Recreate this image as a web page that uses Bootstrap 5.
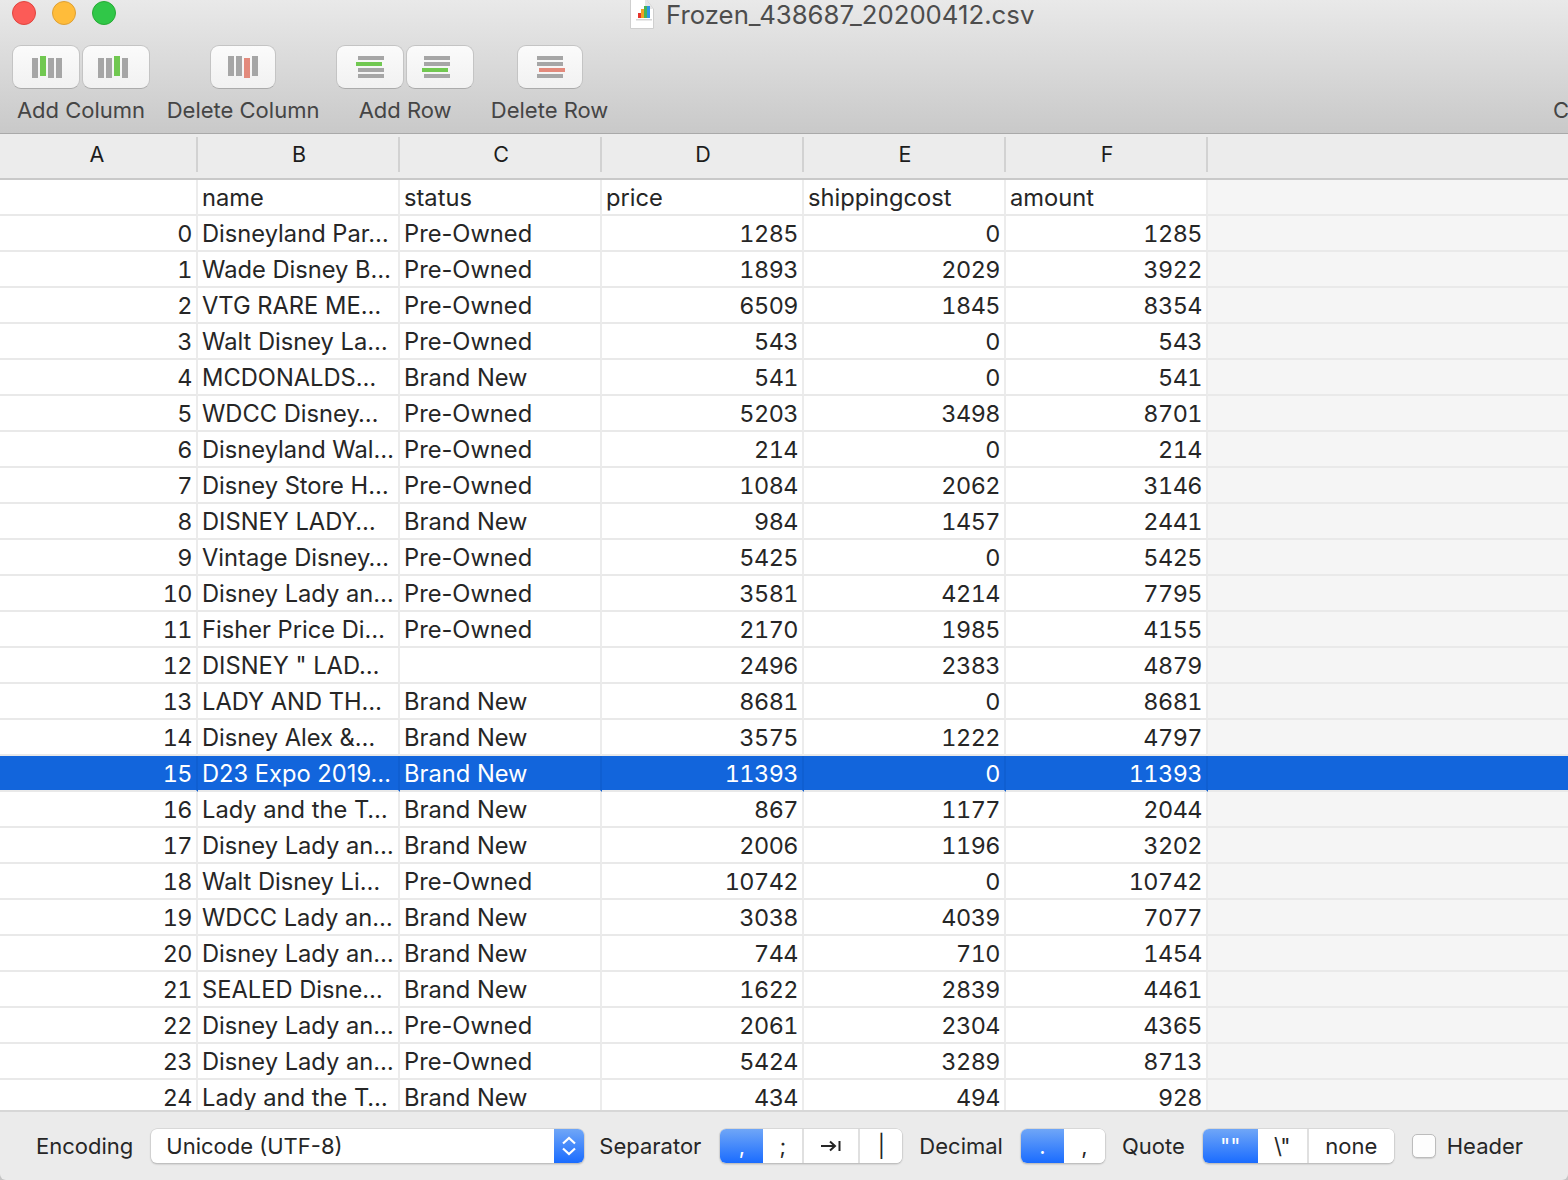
<!DOCTYPE html>
<html lang="en">
<head>
<meta charset="utf-8">
<title>Frozen_438687_20200412.csv</title>
<link href="https://cdn.jsdelivr.net/npm/bootstrap@5.3.0/dist/css/bootstrap.min.css" rel="stylesheet">
<style>
html,body{height:100%;margin:0;overflow:hidden}
body{font-family:Inter,"Liberation Sans",sans-serif;font-size:23.7px;color:#262626;background:#c4c4c4}
.appwin{height:1180px;width:1568px}
.chrome{height:134px;background:linear-gradient(#e9e9e9,#c9c9c9);border-bottom:1px solid #a9a9a9;flex:none}
.titlebar{height:31px;position:relative}
.light{width:24px;height:24px;border-radius:50%;display:block;position:absolute;top:1px}
.l1{left:12px;background:#fc5b57;border:1px solid #e0443e}
.l2{left:52px;background:#ffbc3a;border:1px solid #dea034}
.l3{left:92px;background:#30c748;border:1px solid #27aa35}
.wintitle{position:absolute;left:666px;top:-4px;font-size:25.75px;line-height:38px;color:#4d4d4d;white-space:nowrap}
.docicon{position:absolute;left:630px;top:0}
.tools{padding:14px 0 0 12px;gap:16.7px}
.toolcell{color:#454545;white-space:nowrap}
.toolbtn{height:44px;background:linear-gradient(#fbfbfb,#f1f1f1);border:1px solid #c4c4c4;border-bottom-color:#ababab;border-radius:9px;padding:0;display:flex;align-items:center;justify-content:center}
.w68{width:68px}.w66{width:66px}
.toolbtns{gap:2px}
.nudge3{margin-right:6px}.nudge4{margin-right:8px}.nudge1{margin-left:2px}
.toollabel{line-height:32px;margin-top:4.5px;font-size:22px}
.clipc{margin-left:auto;width:15px;overflow:hidden;color:#454545;font-size:22px;line-height:32px;margin-top:48.5px}
.colhead{height:46px;background:#ececec;border-bottom:2px solid #c9c9c9;flex:none;padding-top:3px}
.hcell{width:202px;height:35px;border-right:2px solid #d2d2d2;line-height:34px;text-align:center;font-size:21.5px;color:#1c1c1c;padding-left:2px}
.hcell.first{width:198px;padding-left:0;padding-right:2px}
.bodyclip{flex:1 1 auto;overflow:hidden;min-height:0;background:#f5f5f5}
table.sheet{table-layout:fixed;width:100%;border-collapse:separate;border-spacing:0;margin:0}
.sheet>tbody>tr>td{height:36px;padding:2px 4px 0 4px;line-height:32px;background:#fff;color:#262626;border-bottom:2px solid #e9e9e9;border-right:2px solid #ececec;white-space:nowrap;overflow:hidden;box-shadow:none;vertical-align:middle}
.sheet>tbody>tr>td.num{text-align:right;padding-right:4px;font-variant-numeric:tabular-nums;font-size:23.4px;letter-spacing:-.5px}
.sheet>tbody>tr>td.filler{background:#f5f5f5;border-right:0}
.sheet>tbody>tr.picked>td,.sheet>tbody>tr.picked>td.filler{background:#1265dc;color:#fff;border-right-color:#0f5fd2}
.footbar{height:70px;flex:none;background:#ebebeb;border-top:2px solid #d7d7d7;padding:0 0 0 36px;border-radius:0 0 6px 6px}
.flabel{white-space:nowrap;color:#262626;font-size:22px}
.selbox{width:433px;height:34px;background:#fff;border-radius:6px;box-shadow:0 0 0 .5px #c9c9c9,0 1px 2px rgba(0,0,0,.3);margin-left:18px;padding-left:15px;line-height:34px;overflow:hidden;font-size:22px;color:#262626}
.stepper{width:30px;height:34px;background:linear-gradient(#6fa6f7,#1a6cff)}
.segs{height:34px;border-radius:6px;box-shadow:0 0 0 .5px #c9c9c9,0 1px 2px rgba(0,0,0,.3);overflow:hidden;background:#fff;flex:none}
.btn-group.segs>.btn{height:34px;padding:0;border:0;border-radius:0;border-right:2px solid #e0e0e0;font-size:22px;line-height:34px;color:#262626;background:#fff;flex:none}
.btn-group.segs>:not(.btn-check:first-child)+.btn{margin-left:0}
.btn-group.segs>.btn:last-child{border-right:0}
.btn-group.segs>.btn.on{background:linear-gradient(#6fa6f7,#1a6cff);color:#fff;border-right:0}
.ml-sep{margin-left:15px}.ml-seg{margin-left:18px}.ml-lab{margin-left:17px}.ml-first{margin-left:19px}
.form-check-input.chk{width:24px;height:24px;margin:0 11px 0 18px;flex:none;border:1px solid #bcbcbc;border-radius:5px;background-color:#fdfdfd;box-shadow:0 1px 1px rgba(0,0,0,.12)}
</style>
</head>
<body>
<div class="appwin d-flex flex-column">
  <div class="chrome">
    <div class="titlebar">
      <span class="light l1"></span><span class="light l2"></span><span class="light l3"></span>
      <svg class="docicon" width="24" height="29" viewBox="0 0 24 29"><path d="M.5 -2H15L23.5 9V28.5H.5Z" fill="#fff" stroke="#cfcfcf"/><path d="M15 -2V9H23.5Z" fill="#e6e6e6"/><rect x="6" y="19" width="16" height="1.5" fill="#d6d6d6"/><rect x="8" y="13" width="3" height="5" fill="#e5342c"/><rect x="11" y="9" width="3" height="9" fill="#f2a124"/><rect x="14" y="6" width="3" height="12" fill="#47b558"/><rect x="17" y="6" width="3" height="12" fill="#2d96e8"/></svg>
      <div class="wintitle">Frozen_438687_20200412.csv</div>
    </div>
    <div class="d-flex tools">
      <div class="toolcell d-flex flex-column align-items-center">
        <div class="d-flex toolbtns">
          <button type="button" class="toolbtn w68"><svg class="nudge1" width="30" height="22" viewBox="0 0 30 22"><rect x="0" y="2" width="6" height="20" fill="#a6a6a6"/><rect x="8" y="0" width="6" height="20" fill="#71c851"/><rect x="16" y="2" width="6" height="20" fill="#a6a6a6"/><rect x="24" y="2" width="6" height="20" fill="#a6a6a6"/></svg></button>
          <button type="button" class="toolbtn w68"><svg class="nudge3" width="30" height="22" viewBox="0 0 30 22"><rect x="0" y="2" width="6" height="20" fill="#a6a6a6"/><rect x="8" y="2" width="6" height="20" fill="#a6a6a6"/><rect x="16" y="0" width="6" height="20" fill="#71c851"/><rect x="24" y="2" width="6" height="20" fill="#a6a6a6"/></svg></button>
        </div>
        <div class="toollabel">Add Column</div>
      </div>
      <div class="toolcell d-flex flex-column align-items-center">
        <button type="button" class="toolbtn w66"><svg width="30" height="22" viewBox="0 0 30 22"><rect x="0" y="0" width="6" height="20" fill="#a6a6a6"/><rect x="8" y="0" width="6" height="20" fill="#a6a6a6"/><rect x="16" y="2" width="6" height="20" fill="#e38a7c"/><rect x="24" y="0" width="6" height="20" fill="#a6a6a6"/></svg></button>
        <div class="toollabel">Delete Column</div>
      </div>
      <div class="toolcell d-flex flex-column align-items-center">
        <div class="d-flex toolbtns">
          <button type="button" class="toolbtn w68"><svg width="28" height="22" viewBox="0 0 28 22"><rect x="2" y="0" width="26" height="4" fill="#a6a6a6"/><rect x="0" y="6" width="26" height="4" fill="#71c851"/><rect x="2" y="12" width="26" height="4" fill="#a6a6a6"/><rect x="2" y="18" width="26" height="4" fill="#a6a6a6"/></svg></button>
          <button type="button" class="toolbtn w68"><svg class="nudge4" width="28" height="22" viewBox="0 0 28 22"><rect x="2" y="0" width="26" height="4" fill="#a6a6a6"/><rect x="2" y="6" width="26" height="4" fill="#a6a6a6"/><rect x="0" y="12" width="26" height="4" fill="#71c851"/><rect x="2" y="18" width="26" height="4" fill="#a6a6a6"/></svg></button>
        </div>
        <div class="toollabel">Add Row</div>
      </div>
      <div class="toolcell d-flex flex-column align-items-center">
        <button type="button" class="toolbtn w66"><svg class="nudge1" width="28" height="22" viewBox="0 0 28 22"><rect x="0" y="0" width="26" height="4" fill="#a6a6a6"/><rect x="0" y="6" width="26" height="4" fill="#a6a6a6"/><rect x="2" y="12" width="26" height="4" fill="#e38a7c"/><rect x="0" y="18" width="26" height="4" fill="#a6a6a6"/></svg></button>
        <div class="toollabel">Delete Row</div>
      </div>
      <div class="clipc">C</div>
    </div>
  </div>
  <div class="colhead d-flex">
    <div class="hcell first">A</div><div class="hcell">B</div><div class="hcell">C</div><div class="hcell">D</div><div class="hcell">E</div><div class="hcell">F</div>
  </div>
  <div class="bodyclip">
    <table class="table sheet">
      <colgroup><col style="width:198px"><col style="width:202px"><col style="width:202px"><col style="width:202px"><col style="width:202px"><col style="width:202px"><col></colgroup>
      <tbody>
        <tr><td class="num"></td><td>name</td><td>status</td><td>price</td><td>shippingcost</td><td>amount</td><td class="filler"></td></tr>
        <tr><td class="num">0</td><td>Disneyland Par…</td><td>Pre-Owned</td><td class="num">1285</td><td class="num">0</td><td class="num">1285</td><td class="filler"></td></tr>
        <tr><td class="num">1</td><td>Wade Disney B…</td><td>Pre-Owned</td><td class="num">1893</td><td class="num">2029</td><td class="num">3922</td><td class="filler"></td></tr>
        <tr><td class="num">2</td><td>VTG RARE ME…</td><td>Pre-Owned</td><td class="num">6509</td><td class="num">1845</td><td class="num">8354</td><td class="filler"></td></tr>
        <tr><td class="num">3</td><td>Walt Disney La…</td><td>Pre-Owned</td><td class="num">543</td><td class="num">0</td><td class="num">543</td><td class="filler"></td></tr>
        <tr><td class="num">4</td><td>MCDONALDS…</td><td>Brand New</td><td class="num">541</td><td class="num">0</td><td class="num">541</td><td class="filler"></td></tr>
        <tr><td class="num">5</td><td>WDCC Disney…</td><td>Pre-Owned</td><td class="num">5203</td><td class="num">3498</td><td class="num">8701</td><td class="filler"></td></tr>
        <tr><td class="num">6</td><td>Disneyland Wal…</td><td>Pre-Owned</td><td class="num">214</td><td class="num">0</td><td class="num">214</td><td class="filler"></td></tr>
        <tr><td class="num">7</td><td>Disney Store H…</td><td>Pre-Owned</td><td class="num">1084</td><td class="num">2062</td><td class="num">3146</td><td class="filler"></td></tr>
        <tr><td class="num">8</td><td>DISNEY LADY…</td><td>Brand New</td><td class="num">984</td><td class="num">1457</td><td class="num">2441</td><td class="filler"></td></tr>
        <tr><td class="num">9</td><td>Vintage Disney…</td><td>Pre-Owned</td><td class="num">5425</td><td class="num">0</td><td class="num">5425</td><td class="filler"></td></tr>
        <tr><td class="num">10</td><td>Disney Lady an…</td><td>Pre-Owned</td><td class="num">3581</td><td class="num">4214</td><td class="num">7795</td><td class="filler"></td></tr>
        <tr><td class="num">11</td><td>Fisher Price Di…</td><td>Pre-Owned</td><td class="num">2170</td><td class="num">1985</td><td class="num">4155</td><td class="filler"></td></tr>
        <tr><td class="num">12</td><td>DISNEY " LAD…</td><td></td><td class="num">2496</td><td class="num">2383</td><td class="num">4879</td><td class="filler"></td></tr>
        <tr><td class="num">13</td><td>LADY AND TH…</td><td>Brand New</td><td class="num">8681</td><td class="num">0</td><td class="num">8681</td><td class="filler"></td></tr>
        <tr><td class="num">14</td><td>Disney Alex &amp;…</td><td>Brand New</td><td class="num">3575</td><td class="num">1222</td><td class="num">4797</td><td class="filler"></td></tr>
        <tr class="picked"><td class="num">15</td><td>D23 Expo 2019…</td><td>Brand New</td><td class="num">11393</td><td class="num">0</td><td class="num">11393</td><td class="filler"></td></tr>
        <tr><td class="num">16</td><td>Lady and the T…</td><td>Brand New</td><td class="num">867</td><td class="num">1177</td><td class="num">2044</td><td class="filler"></td></tr>
        <tr><td class="num">17</td><td>Disney Lady an…</td><td>Brand New</td><td class="num">2006</td><td class="num">1196</td><td class="num">3202</td><td class="filler"></td></tr>
        <tr><td class="num">18</td><td>Walt Disney Li…</td><td>Pre-Owned</td><td class="num">10742</td><td class="num">0</td><td class="num">10742</td><td class="filler"></td></tr>
        <tr><td class="num">19</td><td>WDCC Lady an…</td><td>Brand New</td><td class="num">3038</td><td class="num">4039</td><td class="num">7077</td><td class="filler"></td></tr>
        <tr><td class="num">20</td><td>Disney Lady an…</td><td>Brand New</td><td class="num">744</td><td class="num">710</td><td class="num">1454</td><td class="filler"></td></tr>
        <tr><td class="num">21</td><td>SEALED Disne…</td><td>Brand New</td><td class="num">1622</td><td class="num">2839</td><td class="num">4461</td><td class="filler"></td></tr>
        <tr><td class="num">22</td><td>Disney Lady an…</td><td>Pre-Owned</td><td class="num">2061</td><td class="num">2304</td><td class="num">4365</td><td class="filler"></td></tr>
        <tr><td class="num">23</td><td>Disney Lady an…</td><td>Pre-Owned</td><td class="num">5424</td><td class="num">3289</td><td class="num">8713</td><td class="filler"></td></tr>
        <tr><td class="num">24</td><td>Lady and the T…</td><td>Brand New</td><td class="num">434</td><td class="num">494</td><td class="num">928</td><td class="filler"></td></tr>
      </tbody>
    </table>
  </div>
  <div class="footbar d-flex align-items-center">
    <span class="flabel">Encoding</span>
    <div class="selbox d-flex justify-content-between">
      <span>Unicode (UTF-8)</span>
      <span class="stepper d-flex align-items-center justify-content-center"><svg width="16" height="24" viewBox="0 0 16 24" fill="none" stroke="#fff" stroke-width="2.2"><path d="M2 9.5 8 4 14 9.5M2 14.5 8 20 14 14.5"/></svg></span>
    </div>
    <span class="flabel ml-sep">Separator</span>
    <div class="btn-group segs ml-first" role="group">
      <button type="button" class="btn on" style="width:43px">,</button>
      <button type="button" class="btn" style="width:41px">;</button>
      <button type="button" class="btn d-flex align-items-center justify-content-center" style="width:56px"><svg width="20" height="14" viewBox="0 0 20 14" fill="none" stroke="#262626" stroke-width="2"><path d="M0 7H14M9 2.5 14 7 9 11.5M18.5 2V12"/></svg></button>
      <button type="button" class="btn" style="width:42px">|</button>
    </div>
    <span class="flabel ml-lab">Decimal</span>
    <div class="btn-group segs ml-seg" role="group">
      <button type="button" class="btn on" style="width:43px">.</button>
      <button type="button" class="btn" style="width:41px">,</button>
    </div>
    <span class="flabel ml-lab">Quote</span>
    <div class="btn-group segs ml-seg" role="group">
      <button type="button" class="btn on" style="width:55px">""</button>
      <button type="button" class="btn" style="width:51px">\"</button>
      <button type="button" class="btn" style="width:85px">none</button>
    </div>
    <input class="form-check-input chk" type="checkbox" aria-label="Header">
    <span class="flabel">Header</span>
  </div>
</div>
<script src="https://cdn.jsdelivr.net/npm/bootstrap@5.3.0/dist/js/bootstrap.bundle.min.js"></script>
</body>
</html>
